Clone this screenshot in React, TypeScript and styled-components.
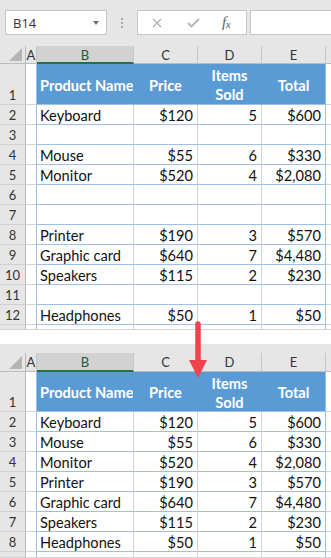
import { Fragment } from 'react'
import styled, { createGlobalStyle } from 'styled-components'

const GlobalStyle = createGlobalStyle`
  html, body {
    margin: 0;
    padding: 0;
    background: #fff;
    overflow: hidden;
  }
  * { box-sizing: border-box; }
`

type Row = [string, string, string, string] | null

const firstRows: Row[] = [
  ['Keyboard', '$120', '5', '$600'],
  null,
  ['Mouse', '$55', '6', '$330'],
  ['Monitor', '$520', '4', '$2,080'],
  null,
  null,
  ['Printer', '$190', '3', '$570'],
  ['Graphic card', '$640', '7', '$4,480'],
  ['Speakers', '$115', '2', '$230'],
  null,
  ['Headphones', '$50', '1', '$50'],
]

const sortedRows: Row[] = firstRows.filter(r => r !== null)

const GRID_BORDER = '#d4d4d4'
const TABLE_BORDER = '#9bc2e6'
const HEAD_BG = '#e6e6e6'

const Page = styled.div`
  position: relative;
  width: 331px;
  height: 558px;
  overflow: hidden;
  font-family: Lato, 'Open Sans', sans-serif;
`

const FormulaBar = styled.div`
  display: flex;
  align-items: flex-start;
  height: 46px;
  padding-top: 10px;
  padding-left: 5px;
  background: ${HEAD_BG};
`

const NameBox = styled.div`
  display: flex;
  align-items: center;
  justify-content: space-between;
  width: 102px;
  height: 25px;
  padding: 0 7px 0 7px;
  background: #fff;
  border: 1px solid #c6c6c6;
  font-family: 'Open Sans', sans-serif;
  font-size: 13px;
  color: #333;
`

const Caret = styled.span`
  width: 0;
  height: 0;
  border-left: 3.5px solid transparent;
  border-right: 3.5px solid transparent;
  border-top: 4px solid #707070;
`

const Dots = styled.div`
  display: flex;
  flex-direction: column;
  gap: 2px;
  width: 30px;
  align-items: center;
  padding-top: 8px;

  span {
    width: 2px;
    height: 2px;
    background: #a8a8a8;
  }
`

const FxBox = styled.div`
  display: flex;
  align-items: center;
  width: 110px;
  height: 25px;
  background: #fff;
  border: 1px solid #c6c6c6;
  padding-left: 14px;
`

const IconSlot = styled.div`
  width: 35px;
  display: flex;
  align-items: center;
`

const Fx = styled.span`
  font-family: 'Liberation Serif', serif;
  font-style: italic;
  font-size: 15px;
  color: #606060;
  letter-spacing: -0.5px;

  sub {
    font-size: 11px;
    vertical-align: -1px;
  }
`

const InputBox = styled.div`
  flex: 1;
  height: 25px;
  margin-left: 3px;
  background: #fff;
  border: 1px solid #c6c6c6;
  border-right: none;
`

const Gap = styled.div`
  height: 14px;
  background: #fff;
`

const Strip = styled.div`
  height: 9px;
  background: ${HEAD_BG};
`

const Grid = styled.div`
  display: grid;
  grid-template-columns: 26px 11px 97px 64px 64px 64px 1fr;
`

const Corner = styled.div<{ $h: number }>`
  position: relative;
  height: ${({ $h }) => $h}px;
  background: ${HEAD_BG};
  border-right: 1px solid #bcbcbc;
  border-bottom: 1px solid #bcbcbc;

  svg {
    position: absolute;
    right: 3px;
    bottom: 2px;
  }
`

const ColHead = styled.div<{ $h: number; $selected?: boolean }>`
  display: flex;
  align-items: center;
  justify-content: center;
  height: ${({ $h }) => $h}px;
  background: ${({ $selected }) => ($selected ? '#d2d2d2' : HEAD_BG)};
  border-right: 1px solid #c6c6c6;
  border-bottom: ${({ $selected }) => ($selected ? '2px solid #217346' : '1px solid #bcbcbc')};
  font-size: 13px;
  color: ${({ $selected }) => ($selected ? '#1d5b37' : '#333')};
  padding-top: ${({ $selected }) => ($selected ? 1 : 0)}px;
`

const RowHead = styled.div<{ $h: number }>`
  display: flex;
  align-items: flex-end;
  justify-content: center;
  height: ${({ $h }) => $h}px;
  overflow: hidden;
  background: ${HEAD_BG};
  border-right: 1px solid #bcbcbc;
  border-bottom: 1px solid #d0d0d0;
  font-size: 13px;
  line-height: 17px;
  color: #333;
`

type CellKind = 'blank' | 'head' | 'data' | 'extra'

const Cell = styled.div<{
  $h: number
  $kind: CellKind
  $align?: 'left' | 'right' | 'center'
  $edge?: boolean
  $wrap?: boolean
}>`
  display: flex;
  align-items: ${({ $kind }) => ($kind === 'head' ? 'center' : 'flex-end')};
  justify-content: ${({ $align }) =>
    $align === 'right' ? 'flex-end' : $align === 'center' ? 'center' : 'flex-start'};
  height: ${({ $h }) => $h}px;
  overflow: hidden;
  padding: ${({ $kind }) => ($kind === 'head' ? '2px 3px 0' : '0 4px 0 3px')};
  background: ${({ $kind }) => ($kind === 'head' ? '#5b9bd5' : '#fff')};
  border-right: 1px solid
    ${({ $kind, $edge }) =>
      $edge ? TABLE_BORDER : $kind === 'head' ? '#5b9bd5' : GRID_BORDER};
  border-bottom: 1px solid
    ${({ $kind }) => ($kind === 'blank' || $kind === 'extra' ? GRID_BORDER : TABLE_BORDER)};
  font-size: 14.6px;
  line-height: ${({ $kind }) => ($kind === 'head' ? 19 : 17)}px;
  font-weight: ${({ $kind }) => ($kind === 'head' ? 700 : 400)};
  color: ${({ $kind }) => ($kind === 'head' ? '#fff' : '#111')};
  text-align: ${({ $align }) => $align ?? 'left'};
  white-space: ${({ $wrap }) => ($wrap ? 'pre-line' : 'nowrap')};
`

const Arrow = styled.svg`
  position: absolute;
  left: 189px;
  top: 321px;
`

type SheetProps = {
  rows: Row[]
  headHeight: number
  titleHeight: number
  tailHeight: number
}

function Sheet({ rows, headHeight, titleHeight, tailHeight }: SheetProps) {
  const letters = ['A', 'B', 'C', 'D', 'E', '']
  return (
    <Grid>
      <Corner $h={headHeight}>
        <svg width="13" height="13" viewBox="0 0 13 13">
          <polygon points="13,0 13,13 0,13" fill="#b5b5b5" />
        </svg>
      </Corner>
      {letters.map((l, i) => (
        <ColHead key={i} $h={headHeight} $selected={l === 'B'}>
          {l}
        </ColHead>
      ))}

      <RowHead $h={titleHeight}>1</RowHead>
      <Cell $h={titleHeight} $kind="blank" $edge />
      <Cell $h={titleHeight} $kind="head">Product Name</Cell>
      <Cell $h={titleHeight} $kind="head" $align="center">Price</Cell>
      <Cell $h={titleHeight} $kind="head" $align="center" $wrap>{'Items\nSold'}</Cell>
      <Cell $h={titleHeight} $kind="head" $align="center" $edge>Total</Cell>
      <Cell $h={titleHeight} $kind="extra" />

      {rows.map((r, i) => (
        <Fragment key={i}>
          <RowHead $h={20}>{i + 2}</RowHead>
          <Cell $h={20} $kind="blank" $edge />
          <Cell $h={20} $kind="data">{r?.[0]}</Cell>
          <Cell $h={20} $kind="data" $align="right">{r?.[1]}</Cell>
          <Cell $h={20} $kind="data" $align="right">{r?.[2]}</Cell>
          <Cell $h={20} $kind="data" $align="right" $edge>{r?.[3]}</Cell>
          <Cell $h={20} $kind="extra" />
        </Fragment>
      ))}

      <RowHead $h={tailHeight} />
      <Cell $h={tailHeight} $kind="blank" $edge />
      <Cell $h={tailHeight} $kind="extra" />
      <Cell $h={tailHeight} $kind="extra" />
      <Cell $h={tailHeight} $kind="extra" />
      <Cell $h={tailHeight} $kind="extra" $edge />
      <Cell $h={tailHeight} $kind="extra" />
    </Grid>
  )
}

export default function App() {
  return (
    <Page>
      <GlobalStyle />
      <FormulaBar>
        <NameBox>
          B14
          <Caret />
        </NameBox>
        <Dots>
          <span />
          <span />
          <span />
        </Dots>
        <FxBox>
          <IconSlot>
            <svg width="10" height="10" viewBox="0 0 10 10">
              <path d="M1 1 L9 9 M9 1 L1 9" stroke="#b3b3b3" strokeWidth="1.4" fill="none" />
            </svg>
          </IconSlot>
          <IconSlot>
            <svg width="13" height="10" viewBox="0 0 13 10">
              <path d="M1 5 L4.5 8.5 L12 1" stroke="#b3b3b3" strokeWidth="1.8" fill="none" />
            </svg>
          </IconSlot>
          <Fx>
            f<sub>x</sub>
          </Fx>
        </FxBox>
        <InputBox />
      </FormulaBar>

      <Sheet rows={firstRows} headHeight={18} titleHeight={41} tailHeight={5} />

      <Gap />
      <Strip />

      <Sheet rows={sortedRows} headHeight={19} titleHeight={40} tailHeight={6} />

      <Arrow width="18" height="58" viewBox="0 0 18 58">
        <line x1="9" y1="3" x2="9" y2="42" stroke="#f0424a" strokeWidth="5.5" strokeLinecap="round" />
        <polygon points="0,39 18,39 9,57" fill="#f0424a" />
      </Arrow>
    </Page>
  )
}
